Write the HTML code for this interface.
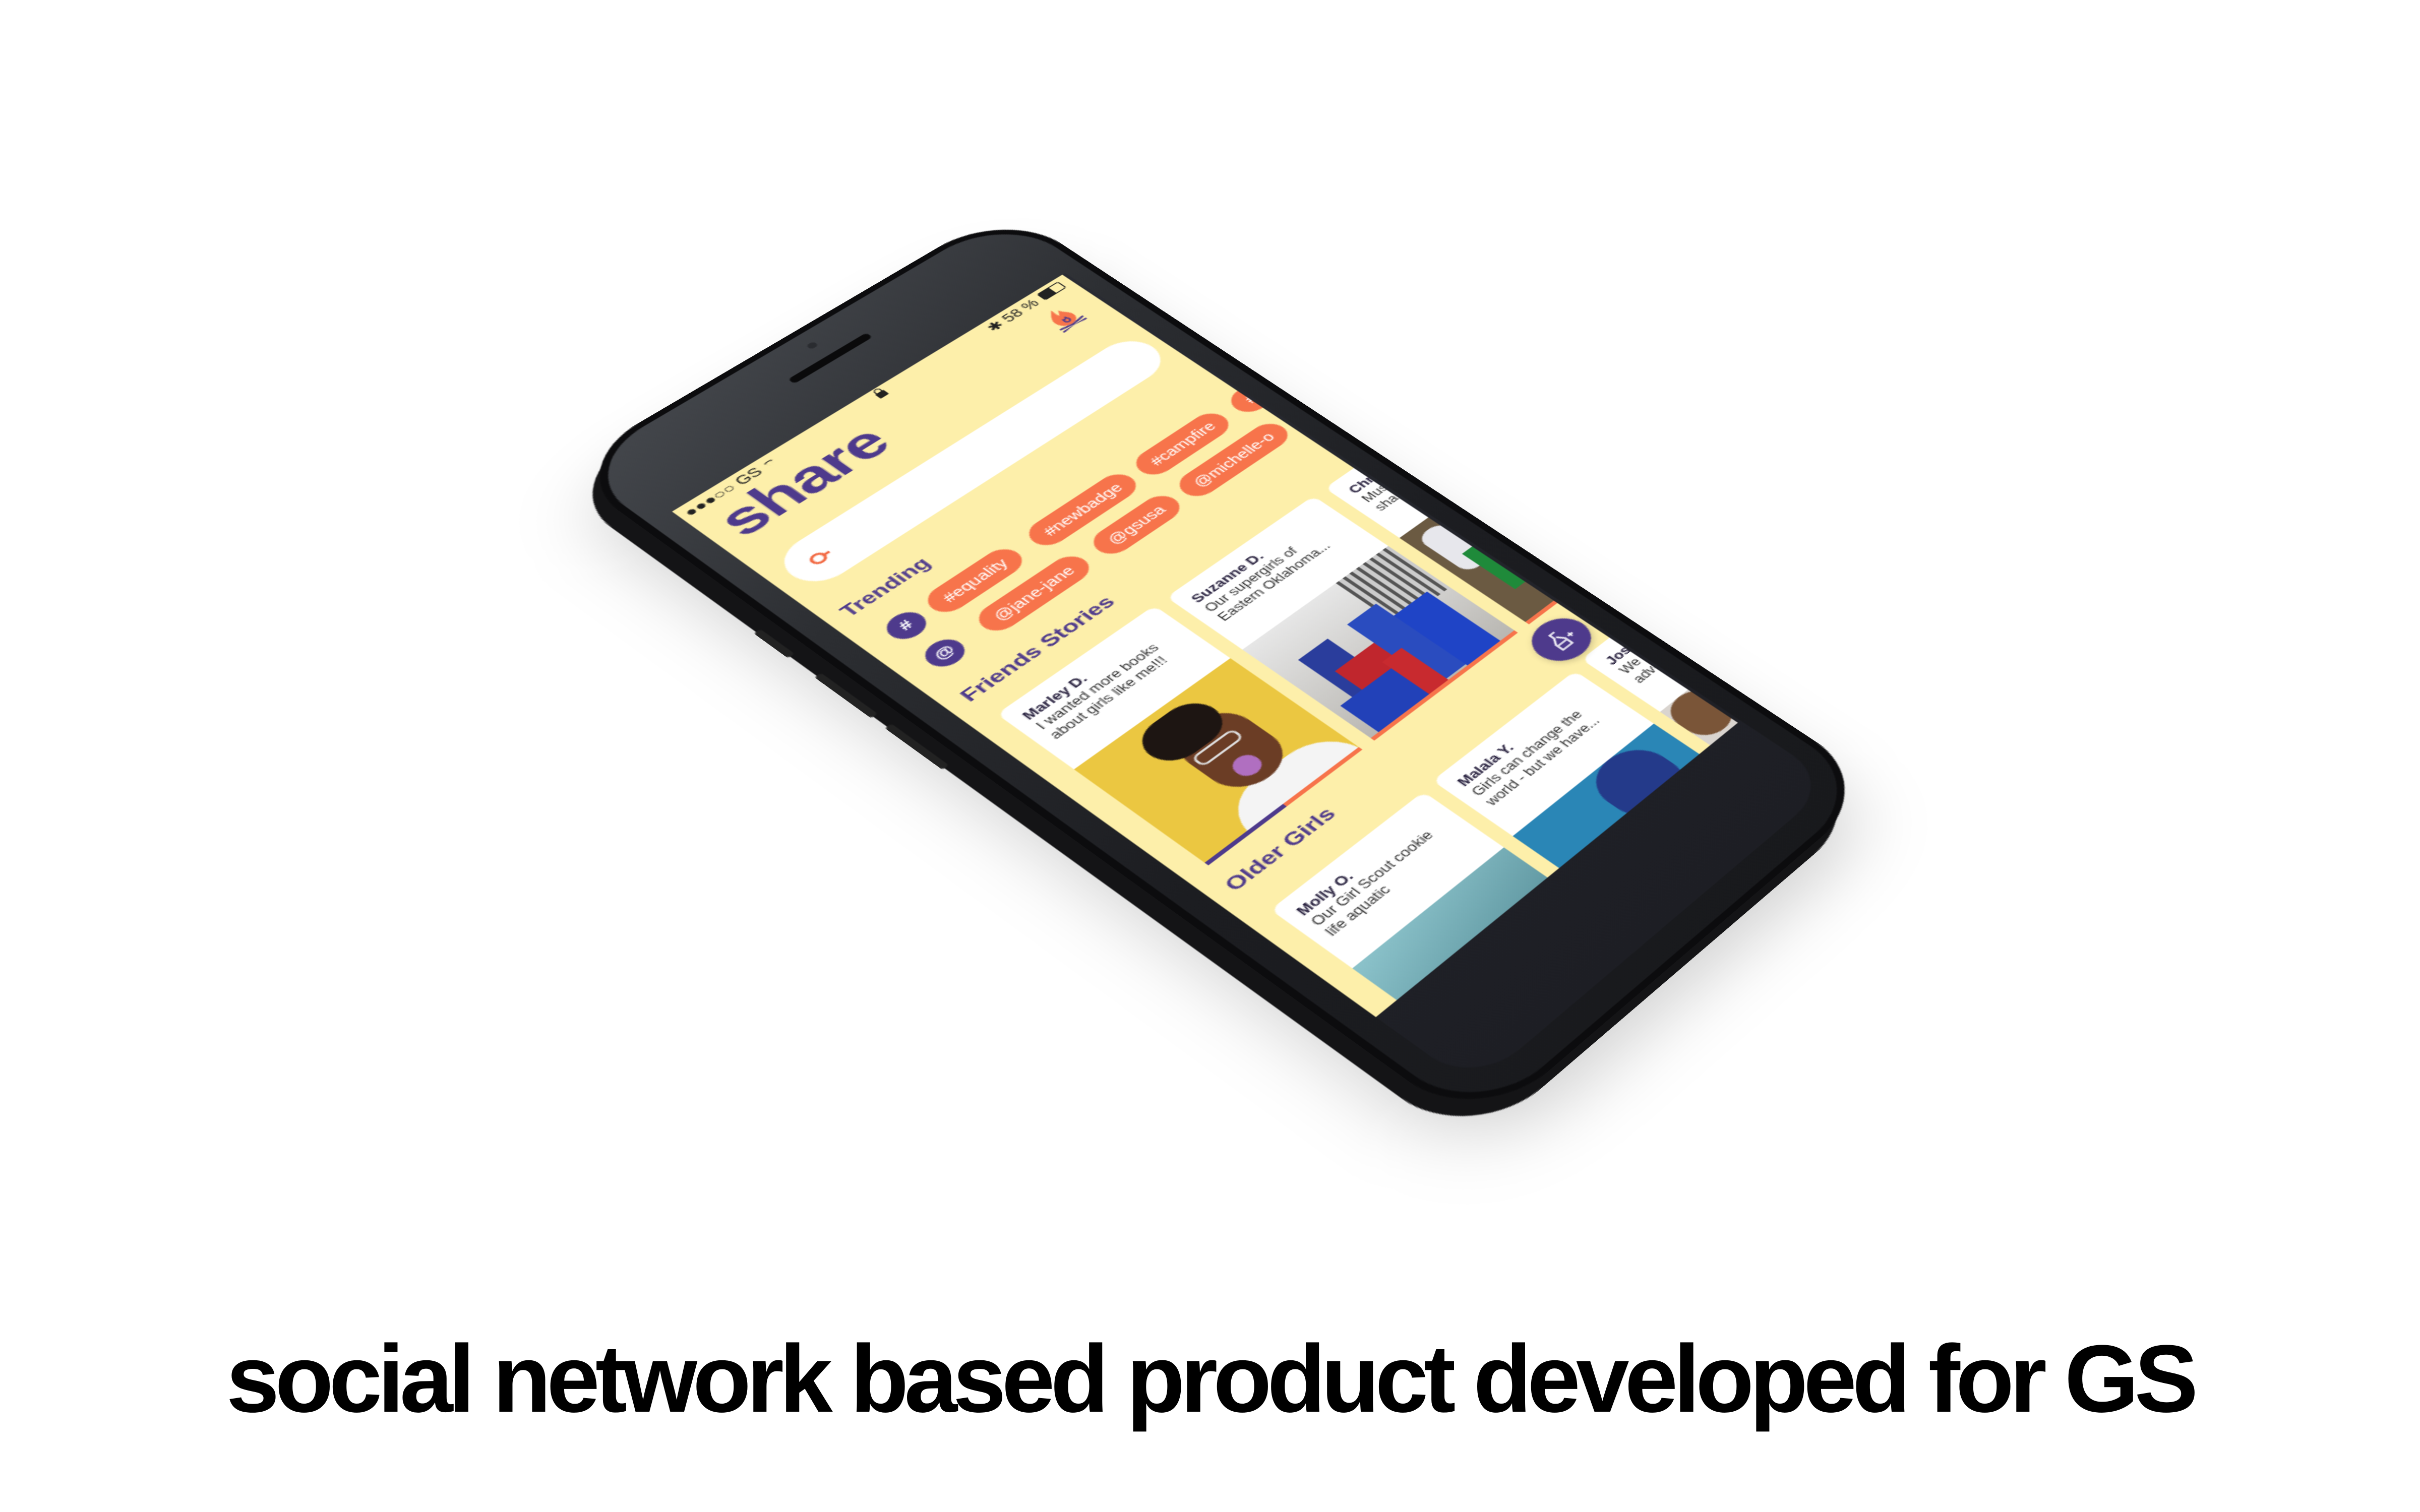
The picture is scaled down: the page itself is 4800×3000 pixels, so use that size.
<!DOCTYPE html>
<html><head><meta charset="utf-8"><style>
*{margin:0;padding:0;box-sizing:border-box}
html,body{width:4800px;height:3000px;background:#fff;overflow:hidden;position:relative;font-family:"Liberation Sans",sans-serif}
.plane{position:absolute;left:0;top:0;width:375px;height:780px;transform-origin:0 0;
transform:matrix3d(2.5171,-1.13627,0,0.00021499,1.5362,1.09846,0,-0.00009291,0,0,1,0,1333,1015,0,1)}
.side{transform:translate(-14px,34px) matrix3d(2.5171,-1.13627,0,0.00021499,1.5362,1.09846,0,-0.00009291,0,0,1,0,1333,1015,0,1)}
.shadow{transform:translate(10px,70px) matrix3d(2.5171,-1.13627,0,0.00021499,1.5362,1.09846,0,-0.00009291,0,0,1,0,1333,1015,0,1)}
.abs{position:absolute}
.scr{position:absolute;left:0;top:0;width:375px;height:780px;background:#FDEFAA;overflow:hidden}
.chip{position:absolute;height:30px;border-radius:15px;background:#F7744B;color:#fff;font-size:14px;line-height:30px;padding:0 12px;white-space:nowrap}
.circ{position:absolute;width:28px;height:28px;border-radius:14px;background:#4E3A8C;color:#fff;font-size:15px;font-weight:bold;line-height:28px;text-align:center}
.h{position:absolute;color:#4E3A8C;font-weight:bold;white-space:nowrap}
.card{position:absolute;width:150px;height:232px;background:#fff;border-radius:8px 8px 0 0;overflow:hidden}
.card .t{position:absolute;left:11px;top:12px;font-size:12px;line-height:15px;color:#333;white-space:nowrap}
.card .t b{color:#2a2340;font-size:12.5px}
.ph{position:absolute;left:0;top:86px;width:150px;height:142px;overflow:hidden}
.st{position:absolute;left:0;bottom:0;width:150px;height:4px;background:#F7744B}
</style></head><body>

<div class="plane shadow" style="filter:blur(30px)">
 <div class="abs" style="left:-25px;top:-100px;width:425px;height:1010px;border-radius:70px;background:rgba(0,0,0,0.18)"></div>
</div>
<div class="plane side">
 <div class="abs" style="left:-25px;top:-100px;width:425px;height:1010px;border-radius:70px;background:#141416"></div>
 <div class="abs" style="left:-27px;top:140px;width:6px;height:40px;border-radius:3px;background:#222"></div>
 <div class="abs" style="left:-27px;top:210px;width:6px;height:65px;border-radius:3px;background:#222"></div>
 <div class="abs" style="left:-27px;top:290px;width:6px;height:65px;border-radius:3px;background:#222"></div>
</div>
<div class="plane">
 <div class="abs" style="left:-25px;top:-100px;width:425px;height:1010px;border-radius:70px;background:#0c0c0e"></div>
 <div class="abs" style="left:-19px;top:-94px;width:413px;height:998px;border-radius:64px;background:linear-gradient(160deg,#44474c 0%,#2c2e32 25%,#1c1d21 60%,#18191c 100%)"></div>
 <div class="abs" style="left:150px;top:-58px;width:75px;height:8px;border-radius:4px;background:#0a0a0b"></div>
 <div class="abs" style="left:184px;top:-80px;width:7px;height:7px;border-radius:4px;background:#2a2c30"></div>
 <div class="abs" style="left:0;top:0;width:378px;height:880px;border-radius:0 0 44px 44px;background:linear-gradient(180deg,#2a2c33,#1d1e24)"></div>
 <div class="scr">
  <div class="abs" style="left:5px;top:2px;font-size:14px;color:#222;white-space:nowrap">●●●○○ GS <span style="font-size:12px">⌔</span></div>
  <div class="abs" style="left:183px;top:6px;width:8px;height:7px;background:#222;border-radius:1px"></div>
  <div class="abs" style="left:184px;top:1px;width:6px;height:7px;border:1.5px solid #222;border-radius:3px 3px 0 0"></div>
  <div class="abs" style="left:292px;top:2px;font-size:14px;color:#222;white-space:nowrap">✱ 58 %</div>
  <div class="abs" style="left:345px;top:4px;width:22px;height:11px;border:1px solid #222;border-radius:2px"><div style="width:11px;height:9px;background:#222"></div></div>
  <svg class="abs" style="left:326px;top:26px" width="30" height="32" viewBox="0 0 30 32">
   <path d="M14 2 C8 9 5 13 6 19 C7 25 12 27 15 27 C20 27 24 23 23 17 C22 12 18 10 18 6 C16 9 15 11 14 12 C13 8 14 5 14 2Z" fill="#F7744B"/>
   <path d="M13 18 C12 21 13 23 15 23 C17 23 18 21 16 17 C15 19 14 19 13 18Z" fill="none" stroke="#4E3A8C" stroke-width="1.5"/>
   <path d="M4 26 L26 30 M4 30 L26 26" stroke="#4E3A8C" stroke-width="2" stroke-linecap="round"/>
  </svg>
  <div class="h" style="left:16px;top:18px;font-size:54px;letter-spacing:-1px;font-weight:900;line-height:54px">share</div>
  <div class="abs" style="left:15px;top:96px;width:350px;height:52px;border-radius:26px;background:#fff"></div>
  <svg class="abs" style="left:32px;top:114px" width="18" height="16" viewBox="0 0 18 16"><circle cx="7" cy="8" r="5" fill="none" stroke="#F26B45" stroke-width="2.5"/><path d="M12 8 H17" stroke="#F26B45" stroke-width="2.5"/></svg>
  <div class="h" style="left:14px;top:174px;font-size:18px">Trending</div>
  <div class="circ" style="left:22px;top:214px">#</div>
  <div class="circ" style="left:22px;top:258px">@</div>
  <div class="chip" style="left:60px;top:213px">#equality</div>
  <div class="chip" style="left:156px;top:213px">#newbadge</div>
  <div class="chip" style="left:262px;top:213px">#campfire</div>
  <div class="chip" style="left:360px;top:213px">#design</div>
  <div class="chip" style="left:72px;top:257px">@jane-jane</div>
  <div class="chip" style="left:182px;top:257px">@gsusa</div>
  <div class="chip" style="left:268px;top:257px">@michelle-o</div>
  <div class="chip" style="left:382px;top:257px">#de</div>
  <div class="h" style="left:15px;top:310px;font-size:19px">Friends Stories</div>
  <div class="card" style="left:20px;top:350px">
   <div class="t"><b>Marley D.</b><br>I wanted more books<br>about girls like me!!!</div>
   <div class="ph" style="background:#EBC741">
    <div class="abs" style="left:40px;top:108px;width:110px;height:60px;border-radius:40px 40px 0 0;background:#f4f4f4"></div>
    <div class="abs" style="left:58px;top:30px;width:58px;height:84px;border-radius:30px;background:#6b3d25"></div>
    <div class="abs" style="left:45px;top:8px;width:62px;height:46px;border-radius:30px;background:#1d1512"></div>
    <div class="abs" style="left:62px;top:56px;width:40px;height:14px;border:2px solid #ddd;border-radius:6px"></div>
    <div class="abs" style="left:74px;top:82px;width:20px;height:22px;border-radius:10px;background:#b06fc0"></div>
   </div>
   <div class="st" style="background:linear-gradient(90deg,#4E3A8C 50%,#F7744B 50%)"></div>
  </div>
  <div class="card" style="left:182px;top:350px">
   <div class="t"><b>Suzanne D.</b><br>Our supergirls of<br>Eastern Oklahoma...</div>
   <div class="ph" style="background:linear-gradient(180deg,#e6e6e6,#b9b7b2)">
    <div class="abs" style="left:95px;top:0;width:55px;height:70px;background:repeating-linear-gradient(90deg,#555 0 3px,#ccc 3px 7px)"></div>
    <div class="abs" style="left:20px;top:40px;width:30px;height:90px;background:#2a3d9c"></div>
    <div class="abs" style="left:30px;top:70px;width:40px;height:72px;background:#c0262d"></div>
    <div class="abs" style="left:70px;top:40px;width:30px;height:100px;background:#2a4cbf"></div>
    <div class="abs" style="left:100px;top:60px;width:35px;height:82px;background:#1f44c6"></div>
    <div class="abs" style="left:8px;top:100px;width:60px;height:42px;background:#2241b8"></div>
    <div class="abs" style="left:60px;top:90px;width:20px;height:52px;background:#c82a2f"></div>
   </div>
   <div class="st"></div>
  </div>
  <div class="card" style="left:344px;top:350px">
   <div class="t"><b>Chris T.</b><br>Muslim girls<br>share stories</div>
   <div class="ph" style="background:#6b5a42">
    <div class="abs" style="left:8px;top:10px;width:26px;height:60px;border-radius:12px;background:#e7e7ec"></div>
    <div class="abs" style="left:20px;top:50px;width:60px;height:60px;background:#1f8a3a"></div>
   </div>
   <div class="st"></div>
  </div>
  <div class="h" style="left:15px;top:600px;font-size:19px">Older Girls</div>
  <div class="card" style="left:20px;top:648px">
   <div class="t"><b>Molly O.</b><br>Our Girl Scout cookie<br>life aquatic</div>
   <div class="ph" style="background:linear-gradient(160deg,#8cc3cb,#3d7580)"></div>
  </div>
  <div class="card" style="left:182px;top:645px">
   <div class="t"><b>Malala Y.</b><br>Girls can change the<br>world - but we have...</div>
   <div class="ph" style="background:#2a86b6">
    <div class="abs" style="left:70px;top:0;width:60px;height:70px;border-radius:30px;background:#243a8a"></div>
    <div class="abs" style="left:10px;top:60px;width:50px;height:40px;border-radius:25px;background:#f0f0f0"></div>
   </div>
  </div>
  <div class="card" style="left:344px;top:640px">
   <div class="t"><b>Josie</b><br>We (s)...<br>adventure</div>
   <div class="ph" style="background:#d9d4cf">
    <div class="abs" style="left:0;top:0;width:40px;height:50px;border-radius:20px;background:#7a5538"></div>
   </div>
  </div>
  <div class="abs" style="left:326px;top:590px;width:46px;height:46px;border-radius:23px;background:#4E3A8C;box-shadow:0 2px 6px rgba(0,0,0,.2)">
   <svg width="46" height="46" viewBox="0 0 46 46"><path d="M19 13 H25 M20 13 V18 L16 24 V32 H26 V24 L22 18 M17 26 H25" fill="none" stroke="#fff" stroke-width="1.6"/><path d="M29 24 H34 M31.5 21.5 V26.5" stroke="#fff" stroke-width="1.4"/></svg>
  </div>
 </div>
</div>

<div class="abs" style="left:0;top:2641px;width:4800px;text-align:center;font-size:190px;line-height:190px;font-weight:bold;letter-spacing:-9px;color:#000;white-space:nowrap">social network based product developed for GS</div>
</body></html>
